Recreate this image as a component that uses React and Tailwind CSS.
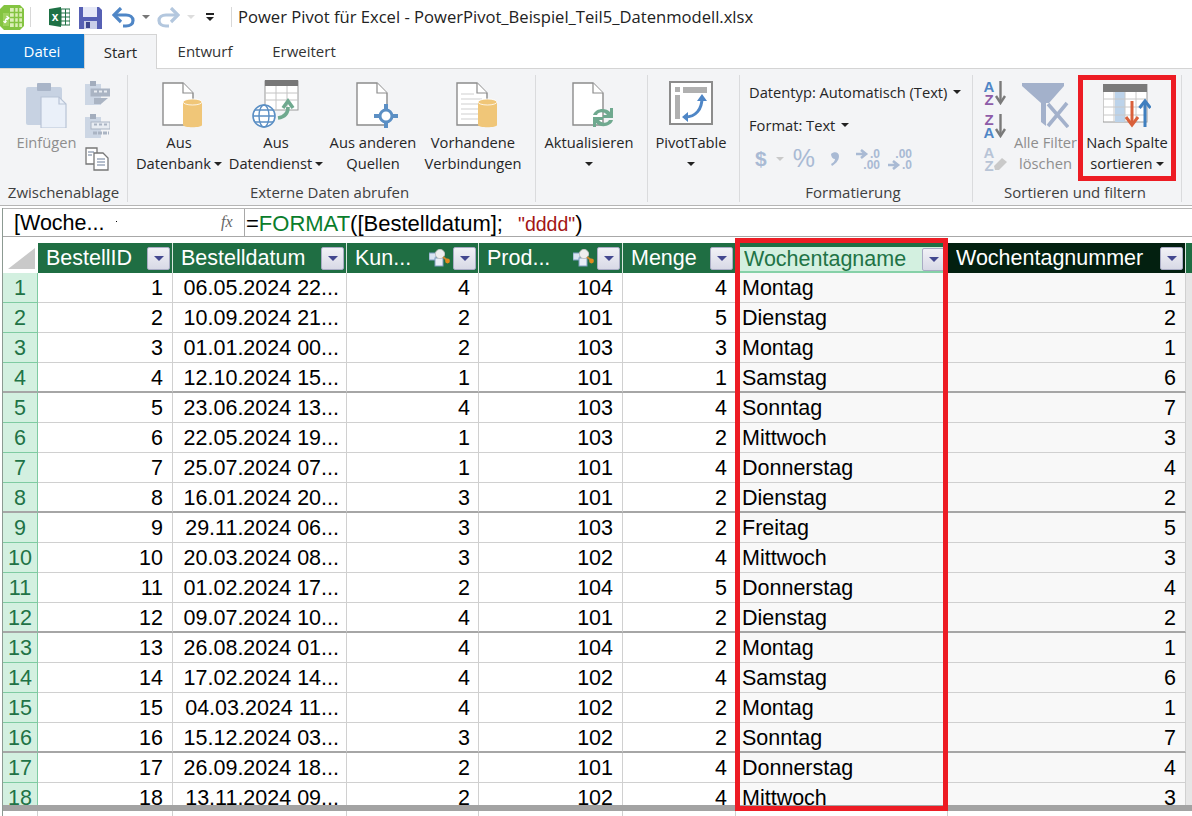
import React from 'react'

const rows = [
    [1, '06.05.2024 22...', 4, 104, 4, 'Montag', 1],
    [2, '10.09.2024 21...', 2, 101, 5, 'Dienstag', 2],
    [3, '01.01.2024 00...', 2, 103, 3, 'Montag', 1],
    [4, '12.10.2024 15...', 1, 101, 1, 'Samstag', 6],
    [5, '23.06.2024 13...', 4, 103, 4, 'Sonntag', 7],
    [6, '22.05.2024 19...', 1, 103, 2, 'Mittwoch', 3],
    [7, '25.07.2024 07...', 1, 101, 4, 'Donnerstag', 4],
    [8, '16.01.2024 20...', 3, 101, 2, 'Dienstag', 2],
    [9, '29.11.2024 06...', 3, 103, 2, 'Freitag', 5],
    [10, '20.03.2024 08...', 3, 102, 4, 'Mittwoch', 3],
    [11, '01.02.2024 17...', 2, 104, 5, 'Donnerstag', 4],
    [12, '09.07.2024 10...', 4, 101, 2, 'Dienstag', 2],
    [13, '26.08.2024 01...', 4, 104, 2, 'Montag', 1],
    [14, '17.02.2024 14...', 4, 102, 4, 'Samstag', 6],
    [15, '04.03.2024 11...', 4, 102, 2, 'Montag', 1],
    [16, '15.12.2024 03...', 3, 102, 2, 'Sonntag', 7],
    [17, '26.09.2024 18...', 2, 101, 4, 'Donnerstag', 4],
    [18, '13.11.2024 09...', 2, 102, 4, 'Mittwoch', 3],
]

const gridCols = 'grid grid-cols-[35px_135px_174px_132px_144px_113px_212px_238px_1fr] grid-rows-[30px]'
const svgFont = "'Liberation Sans', sans-serif"

function Caret({ className = '' }) {
    return <span className={'inline-block w-0 h-0 border-x-[4px] border-x-transparent border-t-[4px] border-t-[#222] ' + className}></span>
}

function PowerPivotIcon() {
    return (
        <svg width="25" height="25" viewBox="0 0 25 25">
            <path d="M4 0H20L24 4V21L20 25H4L0 21V4Z" fill="#84c441" />
            <path d="M10 3H22V22H10Z" fill="#dcefb8" />
            <path d="M10 7.5H23M10 12.5H23M10 17.5H23M14.5 3V22M18.5 3V22" stroke="#84c441" strokeWidth="1.5" />
            <path d="M3 8H9V21H3Z" fill="#9ed25f" />
            <path d="M5 18C5 15 6 13 8 13M6.5 11L9 13L6.5 15M5 18L3.5 16M5 18L6.5 16" stroke="#fff" strokeWidth="1.2" fill="none" />
        </svg>
    )
}

function ExcelIcon() {
    return (
        <svg width="21" height="20" viewBox="0 0 21 20">
            <path d="M0 2L12 0V20L0 18Z" fill="#1e7145" />
            <path d="M12 2H21V18H12Z" fill="#fff" stroke="#1e7145" />
            <path d="M12 6H21M12 10H21M12 14H21M16.5 2V18" stroke="#1e7145" />
            <text x="6" y="14" textAnchor="middle" fontSize="12" fontWeight="700" fill="#fff" fontFamily={svgFont}>x</text>
        </svg>
    )
}

function SaveIcon() {
    return (
        <svg width="23" height="23" viewBox="0 0 23 23">
            <path d="M0 1H20L23 4V23H0Z" fill="#5660b4" />
            <rect x="4" y="1" width="14" height="10" fill="#e6e9f7" />
            <rect x="5" y="15" width="13" height="8" fill="#c9cee8" />
            <rect x="7" y="16" width="4" height="6" fill="#3d468f" />
        </svg>
    )
}

function UndoIcon({ color, flip }) {
    return (
        <svg width="23" height="21" viewBox="0 0 23 21" className={flip ? '-scale-x-100' : ''}>
            <path d="M4 8H14C18 8 21 10 21 13.5S18 19 14 19H11" stroke={color} strokeWidth="3.2" fill="none" />
            <path d="M9 1L2 8L9 15" stroke={color} strokeWidth="3.2" fill="none" />
        </svg>
    )
}

function DocShape({ lines }) {
    return (
        <>
            <path d="M1 1H21L31 11V43H1Z" fill="#fff" stroke="#8c8c8c" strokeWidth="1.4" />
            <path d="M21 1V11H31" fill="#fff" stroke="#8c8c8c" strokeWidth="1.2" />
            {lines && <path d="M5 12H18M5 17H26M5 22H26M5 27H26M5 32H26M5 37H26" stroke="#cfcfcf" strokeWidth="1.2" />}
        </>
    )
}

function Cylinder({ x }) {
    return (
        <>
            <path d={`M${x} 20V43C${x} 46 ${x + 19} 46 ${x + 19} 43V20Z`} fill="#f0c678" />
            <ellipse cx={x + 9.5} cy="20" rx="9.5" ry="3" fill="#f0c678" stroke="#fff" strokeWidth="0.8" />
        </>
    )
}

function DatabaseIcon({ lines }) {
    return (
        <svg width="42" height="46" viewBox="0 0 42 46" className="ml-[7px]">
            <DocShape lines={lines} />
            <Cylinder x={lines ? 22 : 21} />
        </svg>
    )
}

function DataServiceIcon() {
    return (
        <svg width="48" height="48" viewBox="0 0 48 48">
            <rect x="13" y="1" width="33" height="29" fill="#fff" stroke="#9a9a9a" />
            <rect x="13" y="0" width="33" height="6" fill="#777" />
            <path d="M13 13H46M13 20H46M24 6V30M35 6V30" stroke="#c4c4c4" />
            <path d="M26 38C33 37 36 33 36 27M31 28L36 21L41 28" stroke="#6fa98f" strokeWidth="3.6" fill="none" />
            <circle cx="12" cy="36" r="11" fill="#fff" stroke="#5b8fc4" strokeWidth="1.6" />
            <ellipse cx="12" cy="36" rx="5" ry="11" fill="none" stroke="#5b8fc4" strokeWidth="1.4" />
            <path d="M1 36H23M3 30H21M3 42H21" stroke="#5b8fc4" strokeWidth="1.4" />
        </svg>
    )
}

function OtherSourcesIcon() {
    return (
        <svg width="42" height="46" viewBox="0 0 42 46" className="ml-[7px]">
            <DocShape />
            <circle cx="30" cy="34" r="6" fill="#fff" stroke="#5b8fc4" strokeWidth="3" />
            <path d="M30 22V28M30 40V46M18 34H24M36 34H42" stroke="#5b8fc4" strokeWidth="4" />
        </svg>
    )
}

function RefreshIcon() {
    return (
        <svg width="42" height="46" viewBox="0 0 42 46" className="ml-[7px]">
            <DocShape />
            <path d="M21 33C23 26 34 25 38 30V26H41V36H31V33H35C32 29 26 30 25 33Z" fill="#6fa98f" />
            <path d="M41 38C39 45 28 46 24 41V45H21V35H31V38H27C30 42 36 41 37 38Z" fill="#6fa98f" />
        </svg>
    )
}

function PivotIcon() {
    return (
        <svg width="44" height="44" viewBox="0 0 44 44" className="mb-[3px]">
            <rect x="1" y="1" width="42" height="42" fill="#fff" stroke="#8c8c8c" strokeWidth="2" />
            <rect x="6" y="6" width="5" height="5" fill="#b0b0b0" />
            <rect x="14" y="6" width="24" height="6" fill="#b0b0b0" />
            <rect x="6" y="14" width="5" height="24" fill="#b0b0b0" />
            <path d="M16 36C27 36 33 28 33 17" stroke="#4f86c6" strokeWidth="3" fill="none" />
            <path d="M13 36L19 31V41ZM33 13L28 20H38Z" fill="#4f86c6" />
        </svg>
    )
}

function PasteIcon() {
    return (
        <svg width="41" height="46" viewBox="0 0 41 46">
            <rect x="0" y="5" width="36" height="38" rx="2" fill="#c7d2e2" />
            <rect x="11" y="1" width="14" height="8" rx="1" fill="#a9b5c8" />
            <path d="M15 15H33L40 22V46H15Z" fill="#eaf0f9" stroke="#b8c4d6" strokeWidth="1.2" />
            <path d="M33 15V22H40" fill="none" stroke="#b8c4d6" strokeWidth="1.2" />
        </svg>
    )
}

function SmallPasteIcon({ arrow }) {
    return (
        <svg width="25" height="24" viewBox="0 0 25 24">
            <rect x="0" y="3" width="16" height="21" fill="#ccd6e4" />
            <rect x="5" y="0" width="6" height="5" fill="#a3adbd" />
            <rect x="6" y="8" width="19" height="7" fill={arrow ? '#aab4c3' : '#e8ecf2'} stroke="#aab4c3" />
            <path d="M9 10.5H12M14 10.5H17M19 10.5H22" stroke={arrow ? '#e8ecf2' : '#aab4c3'} strokeWidth="2" />
            {arrow
                ? <path d="M9 17H23L16 23H9Z" fill="#aab4c3" />
                : <path d="M8 19H24" stroke="#aab4c3" strokeWidth="3" strokeDasharray="4 1" />}
        </svg>
    )
}

function CopyIcon() {
    return (
        <svg width="24" height="24" viewBox="0 0 24 24">
            <path d="M1 1H12V17H1Z" fill="#fff" stroke="#777" strokeWidth="1.3" />
            <path d="M9 6H18L23 11V23H9Z" fill="#fff" stroke="#777" strokeWidth="1.3" />
            <path d="M3 5H9M3 8H7M12 12H20M12 15H20M12 18H20" stroke="#6d7f99" strokeWidth="1.2" />
        </svg>
    )
}

function SortIcon({ top, bottom, topColor, bottomColor }) {
    return (
        <svg width="24" height="25" viewBox="0 0 24 25">
            <text x="6" y="12" textAnchor="middle" fontSize="15" fontWeight="700" fill={topColor} fontFamily={svgFont}>{top}</text>
            <text x="6" y="25" textAnchor="middle" fontSize="15" fontWeight="700" fill={bottomColor} fontFamily={svgFont}>{bottom}</text>
            <path d="M17.5 1V21" stroke="#7a7a7a" strokeWidth="2.4" />
            <path d="M13 16L17.5 23L22 16" stroke="#7a7a7a" strokeWidth="2.4" fill="none" />
        </svg>
    )
}

function ClearSortIcon() {
    return (
        <svg width="24" height="25" viewBox="0 0 24 25">
            <text x="6" y="12" textAnchor="middle" fontSize="15" fontWeight="700" fill="#b8c4d6" fontFamily={svgFont}>A</text>
            <text x="6" y="25" textAnchor="middle" fontSize="15" fontWeight="700" fill="#b8c4d6" fontFamily={svgFont}>Z</text>
            <path d="M11 20L19 12L24 16L16 24H12Z" fill="#c9c9c9" />
        </svg>
    )
}

function FilterIcon() {
    return (
        <svg width="47" height="46" viewBox="0 0 47 46">
            <path d="M0 1H42V4L27 21H19L0 4Z" fill="#a3b1cb" />
            <path d="M19 21H24V44L19 40Z" fill="#a3b1cb" />
            <path d="M26 22L46 45M45 21L26 44" stroke="#a3b1cb" strokeWidth="3.6" />
        </svg>
    )
}

function SortByColumnIcon() {
    return (
        <svg width="48" height="44" viewBox="0 0 48 44">
            <rect x="0" y="0" width="44" height="38" fill="#fff" stroke="#9a9a9a" />
            <rect x="0" y="0" width="44" height="8" fill="#7a7a7a" />
            <rect x="12" y="8" width="10" height="30" fill="#bcd3ea" />
            <path d="M0 15H44M0 23H44M0 31H44M11 8V38M22 8V38M33 8V38" stroke="#c8c8c8" />
            <path d="M29 17V39" stroke="#d9603b" strokeWidth="3" />
            <path d="M23 33L29 41L35 33" stroke="#d9603b" strokeWidth="3" fill="none" />
            <path d="M42 18V43" stroke="#3f7fbf" strokeWidth="3" />
            <path d="M36.5 24L42 17L47.5 24" stroke="#3f7fbf" strokeWidth="3" fill="none" />
        </svg>
    )
}

function CommaIcon() {
    return (
        <svg width="10" height="16" viewBox="0 0 10 16">
            <path d="M1 3C4 0 9 1 9 5C9 10 5 13 2 15L1 13C3 12 5 10 5 8C3 8 1 6 1 3Z" fill="#a9bad4" />
        </svg>
    )
}

function DecimalIcon({ top, bottom, arrowTop }) {
    return (
        <svg width="24" height="21" viewBox="0 0 24 21">
            <path d={arrowTop ? 'M0 5H8M5 1L10 5L5 9' : 'M0 16H8M5 12L10 16L5 20'} stroke="#a9bad4" strokeWidth="2.6" fill="none" />
            <text x="24" y="9" textAnchor="end" fontSize="12" fontWeight="700" fill="#a9bad4" fontFamily={svgFont}>{top}</text>
            <text x="24" y="20" textAnchor="end" fontSize="12" fontWeight="700" fill="#a9bad4" fontFamily={svgFont}>{bottom}</text>
        </svg>
    )
}

function RibbonButton({ w, icon, first, second, caret, muted }) {
    return (
        <div className={w + ' flex flex-col items-center h-[106px] ' + (muted ? 'text-[#8e8e8e]' : 'text-[#262626]')}>
            <div className="h-[60px] flex items-end justify-center pb-[4px]">{icon}</div>
            <div className="h-[21px] leading-[21px] whitespace-nowrap">{first}</div>
            <div className="h-[21px] leading-[21px] whitespace-nowrap flex items-center gap-[3px]">
                {second}
                {caret && <Caret />}
            </div>
        </div>
    )
}

function Group({ w, label, children, labelClass = '' }) {
    return (
        <div className={w + ' flex flex-col shrink-0'}>
            <div className="h-[110px] flex">{children}</div>
            <div className={'h-[21px] leading-[21px] text-[15px] text-center text-[#404040] whitespace-nowrap ' + labelClass}>{label}</div>
        </div>
    )
}

function Sep() {
    return <div className="w-px my-[3px] bg-[#dadbdd] shrink-0"></div>
}

function FilterButton() {
    return (
        <div className="w-[23px] h-[23px] shrink-0 rounded-[2px] border border-[#a9abc4] bg-gradient-to-b from-[#f1f1f6] to-[#d8d9e6] flex items-center justify-center">
            <span className="w-0 h-0 border-x-[5px] border-x-transparent border-t-[5px] border-t-[#43478f]"></span>
        </div>
    )
}

function RelationIcon() {
    return (
        <svg width="21" height="18" viewBox="0 0 21 18" className="shrink-0">
            <rect x="0" y="4" width="7" height="7" fill="#d9e4f2" stroke="#7d9cc0" />
            <rect x="6" y="9" width="8" height="8" fill="#e8eef7" stroke="#7d9cc0" />
            <circle cx="11" cy="5" r="4.6" fill="#eeeeee" stroke="#c4c4c4" />
            <path d="M14 8L18 11" stroke="#c8872e" strokeWidth="2" />
            <circle cx="18.5" cy="12" r="2.4" fill="#e08a1e" />
        </svg>
    )
}

function HeaderCell({ label, relation, selected, dark }) {
    let bg = 'bg-[#1f6e43] text-white'
    if (selected) bg = 'bg-[#d3f0e0] text-[#217346] border-t-[4px] border-t-[#1f6e43] border-b-2 border-b-[#86d1a8]'
    if (dark) bg = 'bg-[#032010] text-white'
    return (
        <div className={bg + ' flex items-center pl-[8px] pr-[2px] gap-[3px] min-w-0 border-r border-r-[#d8e6de]'}>
            <span className="flex-1 whitespace-nowrap overflow-hidden">{label}</span>
            {relation && <RelationIcon />}
            <FilterButton />
        </div>
    )
}

function Header() {
    return (
        <div className={gridCols + ' h-[30px]'}>
            <div className="bg-white flex items-end justify-end pr-[3px] pb-[4px]">
                <svg width="27" height="21" viewBox="0 0 27 21"><path d="M27 0V21H0Z" fill="#c9c9c9" /></svg>
            </div>
            <HeaderCell label="BestellID" />
            <HeaderCell label="Bestelldatum" />
            <HeaderCell label="Kun..." relation />
            <HeaderCell label="Prod..." relation />
            <HeaderCell label="Menge" />
            <HeaderCell label="Wochentagname" selected />
            <HeaderCell label="Wochentagnummer" dark />
            <div className="bg-[#1f6e43]"></div>
        </div>
    )
}

function Row({ row }) {
    const thick = row[0] % 4 === 0
    const line = thick ? 'pt-[2px] border-b-2 border-b-[#a6a6a6]' : 'pt-[1px] border-b border-b-[#d0d0d0]'
    const cell = 'flex items-center justify-end border-r border-r-[#d0d0d0] whitespace-nowrap ' + line
    return (
        <div className={gridCols + ' h-[30px]'}>
            <div className={'bg-[#d3f0e0] text-[#217346] flex items-center justify-center border-r border-r-[#7fcba2] ' + (thick ? 'pt-[2px] border-b-2 border-b-[#a6a6a6]' : 'pt-[1px] border-b border-b-[#7fcba2]')}>{row[0]}</div>
            <div className={cell + ' pr-[9px]'}>{row[0]}</div>
            <div className={cell + ' pr-[7px]'}>{row[1]}</div>
            <div className={cell + ' pr-[8px]'}>{row[2]}</div>
            <div className={cell + ' pr-[9px]'}>{row[3]}</div>
            <div className={cell + ' pr-[8px]'}>{row[4]}</div>
            <div className={'flex items-center whitespace-nowrap pl-[6px] bg-[#f8f8f8] border-r border-r-[#d0d0d0] ' + line}>{row[5]}</div>
            <div className={cell + ' pr-[9px] bg-[#f8f8f8]'}>{row[6]}</div>
            <div className="bg-[#e6e6e6]"></div>
        </div>
    )
}

export default function App() {
    return (
        <div className="relative w-[1192px] h-[816px] overflow-hidden bg-white text-[14.7px] text-[#262626] font-['Open_Sans',sans-serif]">
            {/* title bar */}
            <div className="h-[34px] flex items-center">
                <div className="w-[30px]"><PowerPivotIcon /></div>
                <div className="w-px h-[20px] bg-[#d8d8d8]"></div>
                <div className="ml-[18px]"><ExcelIcon /></div>
                <div className="ml-[9px]"><SaveIcon /></div>
                <div className="ml-[10px]"><UndoIcon color="#4f86c6" /></div>
                <Caret className="ml-[7px] border-t-[#777]" />
                <div className="ml-[7px]"><UndoIcon color="#b3c7de" flip /></div>
                <Caret className="ml-[7px] border-t-[#ddd]" />
                <div className="ml-[11px] flex flex-col items-center gap-[2px]">
                    <div className="w-[8px] h-[2px] bg-[#222]"></div>
                    <Caret />
                </div>
                <div className="ml-[17px] w-px h-[20px] bg-[#d8d8d8]"></div>
                <div className="ml-[6px] text-[16.6px] text-[#222] whitespace-nowrap">Power Pivot für Excel - PowerPivot_Beispiel_Teil5_Datenmodell.xlsx</div>
            </div>

            {/* tabs */}
            <div className="h-[35px] flex items-stretch border-b border-b-[#d4d4d4] text-[15px]">
                <div className="w-[84px] bg-[#1177cc] text-white flex items-center justify-center">Datei</div>
                <div className="w-[73px] -mb-px bg-[#f3f4f6] border-x border-t border-[#d4d4d4] flex items-center justify-center">Start</div>
                <div className="w-[96px] flex items-center justify-center text-[#333]">Entwurf</div>
                <div className="w-[102px] flex items-center justify-center text-[#333]">Erweitert</div>
            </div>

            {/* ribbon */}
            <div className="h-[137px] pt-[3px] bg-[#f3f4f6] border-b border-b-[#b5b5b5] flex">
                <Group w="w-[127px]" label="Zwischenablage">
                    <div className="w-[85px]">
                        <RibbonButton w="w-[93px]" muted icon={<PasteIcon />} first="Einfügen" />
                    </div>
                    <div className="flex flex-col gap-[9px] pt-[9px]">
                        <SmallPasteIcon arrow />
                        <SmallPasteIcon />
                        <CopyIcon />
                    </div>
                </Group>
                <Sep />
                <Group w="w-[407px]" label="Externe Daten abrufen" labelClass="pr-[4px]">
                    <div className="flex gap-1 pl-[6px]">
                        <RibbonButton w="w-[90px]" icon={<DatabaseIcon />} first="Aus" second="Datenbank" caret />
                        <RibbonButton w="w-[96px]" icon={<DataServiceIcon />} first="Aus" second="Datendienst" caret />
                        <RibbonButton w="w-[90px]" icon={<OtherSourcesIcon />} first="Aus anderen" second="Quellen" />
                        <RibbonButton w="w-[102px]" icon={<DatabaseIcon lines />} first="Vorhandene" second="Verbindungen" />
                    </div>
                </Group>
                <Sep />
                <Group w="w-[111px]" label="">
                    <div className="pl-[2px]">
                        <RibbonButton w="w-[102px]" icon={<RefreshIcon />} first="Aktualisieren" second="" caret />
                    </div>
                </Group>
                <Sep />
                <Group w="w-[91px]" label="">
                    <div className="pl-[2px]">
                        <RibbonButton w="w-[82px]" icon={<PivotIcon />} first="PivotTable" second="" caret />
                    </div>
                </Group>
                <Sep />
                <Group w="w-[232px]" label="Formatierung" labelClass="pr-[6px]">
                    <div className="pl-[9px] flex flex-col gap-[11px] pt-[9px]">
                        <div className="h-[22px] flex items-center gap-[6px] whitespace-nowrap">Datentyp: Automatisch (Text)<Caret /></div>
                        <div className="h-[22px] flex items-center gap-[6px] whitespace-nowrap">Format: Text<Caret /></div>
                        <div className="h-[24px] flex items-center text-[#a9bad4] font-bold font-['Liberation_Sans',sans-serif]">
                            <span className="text-[21px] ml-[6px]">$</span>
                            <Caret className="ml-[9px] border-t-[#c9c9c9]" />
                            <span className="text-[25px] ml-[9px] font-normal">%</span>
                            <div className="ml-[15px]"><CommaIcon /></div>
                            <div className="ml-[16px]"><DecimalIcon top=".0" bottom=".00" arrowTop /></div>
                            <div className="ml-[8px]"><DecimalIcon top=".00" bottom=".0" /></div>
                        </div>
                    </div>
                </Group>
                <Sep />
                <Group w="w-[208px]" label="Sortieren und filtern" labelClass="pr-[4px]">
                    <div className="pl-[10px] flex flex-col gap-[8px] pt-[8px]">
                        <SortIcon top="A" bottom="Z" topColor="#4f86c6" bottomColor="#8e5ca8" />
                        <SortIcon top="Z" bottom="A" topColor="#8e5ca8" bottomColor="#4f86c6" />
                        <ClearSortIcon />
                    </div>
                    <div className="ml-[5px]">
                        <RibbonButton w="w-[67px]" muted icon={<FilterIcon />} first="Alle Filter" second="löschen" />
                    </div>
                    <div className="ml-[5px]">
                        <RibbonButton w="w-[86px]" icon={<SortByColumnIcon />} first="Nach Spalte" second="sortieren" caret />
                    </div>
                </Group>
                <Sep />
            </div>

            {/* formula bar + table */}
            <div className="ml-[2px] mt-[2px] border-l border-l-[#8c9a92] text-[21.5px] leading-[26px] font-['Liberation_Sans',Arial,sans-serif] text-black">
                <div className="h-[29px] border-t border-t-[#b5b5b5] border-b border-b-[#a8a8a8] flex">
                    <div className="w-[242px] border-r border-r-[#a8a8a8] flex items-center pl-[11px] relative">
                        <span>[Woche...</span>
                        <span className="ml-[12px] mb-[2px] w-px h-px bg-black"></span>
                        <span className="absolute left-[218px] top-[0px] text-[16px] italic text-[#666] font-['Liberation_Serif',serif]">fx</span>
                    </div>
                    <div className="pl-[1px] pt-[2px] flex items-center whitespace-pre text-[22px]">
                        =<span className="text-[#0a7d2c]">FORMAT</span>([Bestelldatum];<span className="text-[#a31515] text-[19.5px] ml-[15px]">"dddd"</span>)
                    </div>
                </div>
                <div className="h-[6px]"></div>
                <div className="h-[562px] overflow-hidden">
                    <Header />
                    {rows.map((row) => <Row key={row[0]} row={row} />)}
                </div>
                <div className="h-[6px] bg-[#a3a3a3]"></div>
                <div className={gridCols + ' h-[6px]'}>
                    <div className="border-r border-r-[#d0d0d0]"></div>
                    <div className="border-r border-r-[#d0d0d0]"></div>
                    <div className="border-r border-r-[#d0d0d0]"></div>
                    <div className="border-r border-r-[#d0d0d0]"></div>
                    <div className="border-r border-r-[#d0d0d0]"></div>
                    <div className="border-r border-r-[#d0d0d0]"></div>
                    <div className="border-r border-r-[#d0d0d0]"></div>
                    <div></div>
                </div>
            </div>

            {/* red highlight frames */}
            <div className="absolute left-[735px] top-[238px] w-[213px] h-[573px] border-[5px] border-[#ed1c24]"></div>
            <div className="absolute left-[1078px] top-[75px] w-[98px] h-[106px] border-[5px] border-[#ed1c24]"></div>
        </div>
    )
}
